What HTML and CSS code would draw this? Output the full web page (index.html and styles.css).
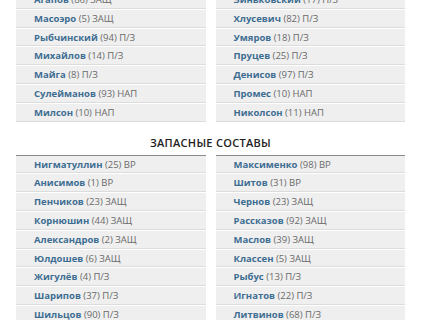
FILE: index.html
```html
<!DOCTYPE html>
<html lang="ru">
<head>
<meta charset="utf-8">
<link rel="stylesheet" href="styles.css">
</head>
<body>
<div class="page">
  <div class="cols">
    <ul class="list">
      <li><b>Агапов</b> (86) ЗАЩ</li>
      <li><b>Масоэро</b> (5) ЗАЩ</li>
      <li><b>Рыбчинский</b> (94) П/З</li>
      <li><b>Михайлов</b> (14) П/З</li>
      <li><b>Майга</b> (8) П/З</li>
      <li><b>Сулейманов</b> (93) НАП</li>
      <li><b>Милсон</b> (10) НАП</li>
    </ul>
    <ul class="list">
      <li><b>Зиньковский</b> (17) П/З</li>
      <li><b>Хлусевич</b> (82) П/З</li>
      <li><b>Умяров</b> (18) П/З</li>
      <li><b>Пруцев</b> (25) П/З</li>
      <li><b>Денисов</b> (97) П/З</li>
      <li><b>Промес</b> (10) НАП</li>
      <li><b>Николсон</b> (11) НАП</li>
    </ul>
  </div>
  <h2 class="title">Запасные составы</h2>
  <div class="cols">
    <ul class="list top">
      <li><b>Нигматуллин</b> (25) ВР</li>
      <li><b>Анисимов</b> (1) ВР</li>
      <li><b>Пенчиков</b> (23) ЗАЩ</li>
      <li><b>Корнюшин</b> (44) ЗАЩ</li>
      <li><b>Александров</b> (2) ЗАЩ</li>
      <li><b>Юлдошев</b> (6) ЗАЩ</li>
      <li><b>Жигулёв</b> (4) П/З</li>
      <li><b>Шарипов</b> (37) П/З</li>
      <li><b>Шильцов</b> (90) П/З</li>
    </ul>
    <ul class="list top">
      <li><b>Максименко</b> (98) ВР</li>
      <li><b>Шитов</b> (31) ВР</li>
      <li><b>Чернов</b> (23) ЗАЩ</li>
      <li><b>Рассказов</b> (92) ЗАЩ</li>
      <li><b>Маслов</b> (39) ЗАЩ</li>
      <li><b>Классен</b> (5) ЗАЩ</li>
      <li><b>Рыбус</b> (13) П/З</li>
      <li><b>Игнатов</b> (22) П/З</li>
      <li><b>Литвинов</b> (68) П/З</li>
    </ul>
  </div>
</div>
</body>
</html>
```

FILE: styles.css
```css
html, body {
  margin: 0;
  padding: 0;
  background: #fff;
}
body {
  font-family: "Open Sans", "DejaVu Sans", sans-serif;
  overflow: hidden;
}
.page {
  margin-top: -9px;
  padding: 0 25px 0 16px;
}
.cols {
  display: grid;
  grid-template-columns: 1fr 1fr;
  column-gap: 10px;
}
.list {
  list-style: none;
  margin: 0;
  padding: 0;
}
.list.top {
  border-top: 1px solid #8a8a8a;
}
.list li {
  background: #efefef;
  height: 16.8px;
  line-height: 17px;
  border-bottom: 1px solid #dcdcdc;
  margin-bottom: 1px;
  padding-left: 18px;
  font-size: 9.5px;
  color: #6a6a6a;
  white-space: nowrap;
  overflow: hidden;
}
.list li b {
  color: #3e6d92;
  font-weight: 700;
}
.title {
  margin: 0;
  height: 32px;
  line-height: 40px;
  text-align: center;
  font-size: 11px;
  font-weight: 600;
  color: #222;
  text-transform: uppercase;
  letter-spacing: 0.3px;
}
```
